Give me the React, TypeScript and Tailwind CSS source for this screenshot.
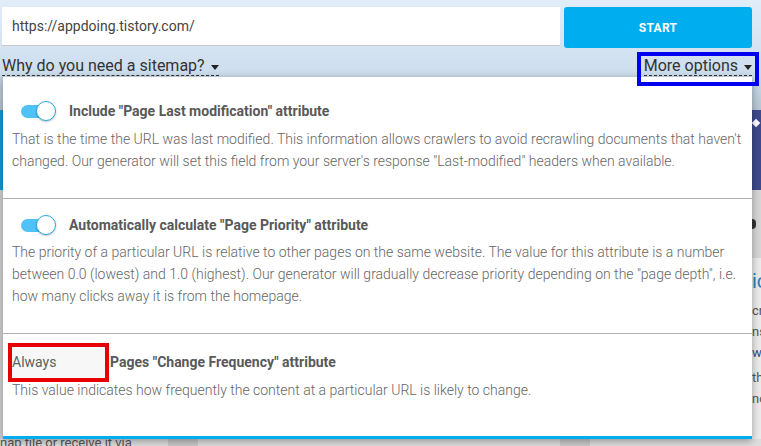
import React from 'react';

const Toggle: React.FC = () => (
    <div className="relative w-[35px] h-[20px] shrink-0">
        <div className="absolute left-0 top-[4px] w-[30px] h-[13px] rounded-full bg-[#4fc3f7]" />
        <div className="absolute right-0 top-0 w-[20px] h-[20px] rounded-full bg-white border-[1.5px] border-[#29a9e1] shadow-[0_1px_2px_rgba(0,0,0,0.25)]" />
    </div>
);

const Caret: React.FC = () => (
    <svg width="8" height="5" viewBox="0 0 8 5" className="ml-[6px] mt-[3px]">
        <path d="M0 0h8L4 5z" fill="#222" />
    </svg>
);

const App: React.FC = () => {
    return (
        <div className="relative w-[761px] h-[446px] overflow-hidden font-['Roboto','Liberation_Sans',sans-serif] bg-[#e4e4e4]">
            {/* page header area */}
            <div className="h-[77px] bg-gradient-to-b from-[#e1edf9] to-[#cddded] pt-[7px]">
                <div className="flex pl-[2px] pr-[9px] gap-[4px]">
                    <div className="w-[558px] h-[39px] bg-white border-b border-[#c8c8c8] flex items-center pl-[10px] text-[14px] text-[#444]">
                        https://appdoing.tistory.com/
                    </div>
                    <button className="flex-1 h-[41px] rounded-[3px] bg-[#00adef] text-white text-[12px] font-bold tracking-[0.3px]">
                        START
                    </button>
                </div>
                <div className="flex justify-between items-start pl-[2px] pr-[9px] mt-[8px]">
                    <div className="flex items-center text-[16px] leading-[19px] text-[#333] border-b border-dashed border-[#333]">
                        Why do you need a sitemap?
                        <Caret />
                    </div>
                    <div className="flex items-center text-[16px] leading-[19px] text-[#333] border-b border-dashed border-[#333]">
                        More options
                        <Caret />
                    </div>
                </div>
            </div>

            {/* page content underneath the dropdown */}
            <div className="flex h-[362px]">
                <div className="w-[3px] flex flex-col">
                    <div className="h-[33px] bg-gradient-to-b from-[#c3d2e0] to-[#b9c6d3]" />
                    <div className="h-[80px] bg-[#1a98d5]" />
                    <div className="flex-1 bg-[#d3d3d3]" />
                </div>
                <div className="flex-1" />
                <div className="w-[9px] flex flex-col">
                    <div className="h-[33px] bg-gradient-to-b from-[#cbdbea] to-[#b7c6d4]" />
                    <div className="h-[80px] bg-[#3e4a8b] flex items-start pt-[10px]">
                        <div className="w-[6px] h-[6px] rotate-45 bg-white ml-[1px]" />
                    </div>
                    <div className="h-[68px] bg-[#d6d6d6] flex items-center">
                        <div className="w-[4px] h-[10px] rounded-r-full bg-[#333]" />
                    </div>
                    <div className="flex-1 bg-[#ebebeb] text-[13px] leading-[21px] text-[#555] overflow-hidden whitespace-nowrap">
                        <div className="text-[20px] leading-[26px] text-[#2a7fc0] mt-[10px]">ic</div>
                        <div className="mt-[6px]">cr</div>
                        <div>ns</div>
                        <div className="text-[#3a4a90]">w</div>
                        <div className="mt-[4px]">th</div>
                        <div>no</div>
                    </div>
                </div>
            </div>
            <div className="flex h-[7px] bg-[#dedede] text-[13px] leading-[14px] text-[#555] overflow-hidden">
                <div className="w-[168px] -mt-[3px] whitespace-nowrap">nap file or receive it via</div>
                <div className="w-[30px] bg-[#c9c9c9]" />
                <div className="w-[362px]" />
                <div className="w-[30px] bg-[#cbcbcb]" />
            </div>

            {/* "More options" dropdown */}
            <div className="absolute left-[3px] top-[77px] w-[749px] h-[362px] bg-white border-b-[3px] border-[#00aeef] shadow-[0_2px_8px_rgba(0,0,0,0.35)] text-[14px]">
                <div className="px-[9px] pt-[24px] pb-[26px]">
                    <div className="flex items-center h-[20px] pl-[9px] gap-[13px]">
                        <Toggle />
                        <span className="font-bold text-[#595959]">Include "Page Last modification" attribute</span>
                    </div>
                    <p className="mt-[7px] leading-[22px] font-light text-[#666] whitespace-nowrap">
                        That is the time the URL was last modified. This information allows crawlers to avoid recrawling documents that haven't<br />
                        changed. Our generator will set this field from your server's response "Last-modified" headers when available.
                    </p>
                </div>
                <div className="border-t border-[#b3b3b3] px-[9px] pt-[16px] pb-[26px]">
                    <div className="flex items-center h-[20px] pl-[9px] gap-[13px]">
                        <Toggle />
                        <span className="font-bold text-[#595959]">Automatically calculate "Page Priority" attribute</span>
                    </div>
                    <p className="mt-[6px] leading-[22px] font-light text-[#666] whitespace-nowrap">
                        The priority of a particular URL is relative to other pages on the same website. The value for this attribute is a number<br />
                        between 0.0 (lowest) and 1.0 (highest). Our generator will gradually decrease priority depending on the "page depth", i.e.<br />
                        how many clicks away it is from the homepage.
                    </p>
                </div>
                <div className="border-t border-[#b3b3b3] px-[9px] pt-[13px]">
                    <div className="flex items-center h-[31px] gap-[5px]">
                        <div className="w-[93px] h-[31px] bg-[#f7f7f7] flex items-center text-[14px] text-[#5e5e5e] outline-[4px] outline-solid outline-[#e60000]">
                            Always
                        </div>
                        <span className="font-bold text-[#595959]">Pages "Change Frequency" attribute</span>
                    </div>
                    <p className="mt-[1px] leading-[22px] font-light text-[#666]">
                        This value indicates how frequently the content at a particular URL is likely to change.
                    </p>
                </div>
            </div>

            {/* highlight box around More options */}
            <div className="absolute left-[637px] top-[52px] w-[122px] h-[34px] border-[4px] border-[#0000f0]" />
        </div>
    );
};

export default App;
